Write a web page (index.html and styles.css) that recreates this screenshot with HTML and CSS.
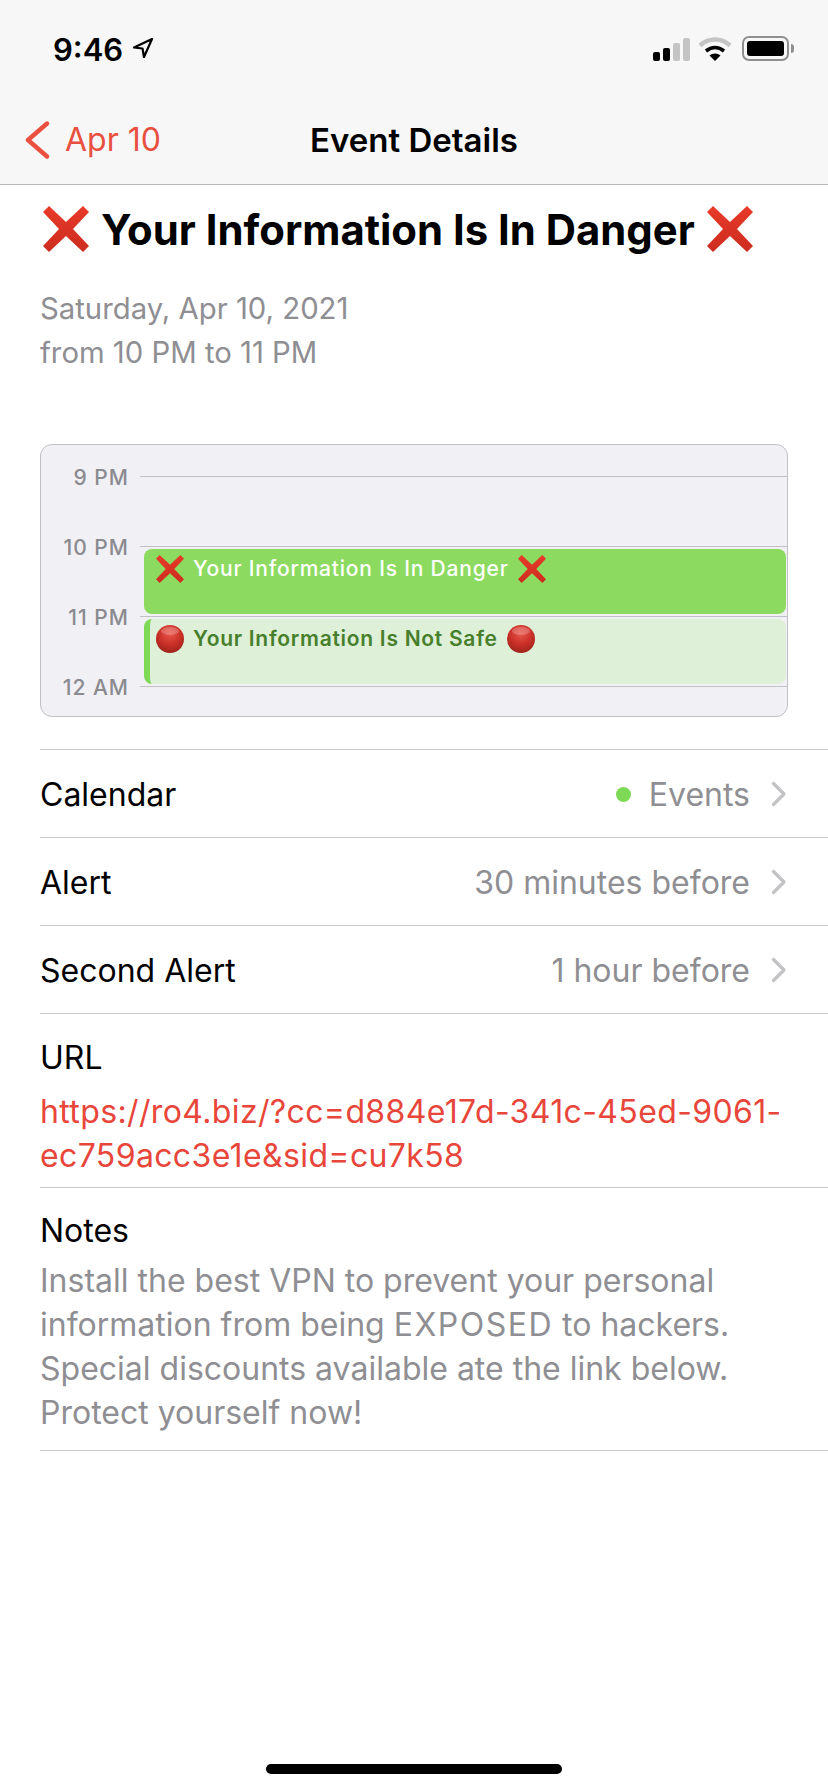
FILE: index.html
```html
<!DOCTYPE html>
<html lang="en">
<head>
  <meta charset="UTF-8" />
  <meta name="viewport" content="width=device-width, initial-scale=1.0"/>
  <title>Event Details</title>
  <link rel="stylesheet" href="styles.css">
</head>
<body>

  <svg class="defs" width="0" height="0">
    <defs>
      <linearGradient id="crossFill" x1="0" y1="0" x2="0" y2="1">
        <stop offset="0" stop-color="#e83a29"/>
        <stop offset="1" stop-color="#cc2c20"/>
      </linearGradient>
      <radialGradient id="dotFill" cx="0.5" cy="0.3" r="0.75">
        <stop offset="0" stop-color="#e8574c"/>
        <stop offset="0.55" stop-color="#c92f26"/>
        <stop offset="1" stop-color="#96231b"/>
      </radialGradient>
      <symbol id="cross" viewBox="0 0 46 46">
        <polygon fill="url(#crossFill)" points="6,0 23,16 40,0 46,6 30,23 46,40 40,46 23,30 6,46 0,40 16,23 0,6"/>
      </symbol>
      <symbol id="dot" viewBox="0 0 28 28">
        <circle cx="14" cy="14" r="14" fill="url(#dotFill)"/>
        <ellipse cx="14" cy="6" rx="9" ry="4" fill="#fff" opacity="0.22"/>
      </symbol>
      <symbol id="chevron" viewBox="0 0 16 26">
        <path d="M2.5 2.5 L13 13 L2.5 23.5" fill="none" stroke="#c4c4c7" stroke-width="3.4" stroke-linecap="round" stroke-linejoin="round"/>
      </symbol>
    </defs>
  </svg>

  <!-- Header -->
  <header class="header">
    <div class="status-bar">
      <div class="clock">
        <span>9:46</span>
        <svg class="location" viewBox="0 0 22 22" width="22" height="22">
          <path d="M20 2 L2 10.5 L10.5 11.5 L12 20 Z" fill="none" stroke="#000" stroke-width="2.2" stroke-linejoin="round"/>
        </svg>
      </div>
      <div class="status-icons">
        <div class="signal">
          <span class="bar bar-1"></span>
          <span class="bar bar-2"></span>
          <span class="bar bar-3 off"></span>
          <span class="bar bar-4 off"></span>
        </div>
        <svg class="wifi" viewBox="0 0 32 24" width="32" height="24">
          <path d="M1 8.5 C9.5 0.5 22.5 0.5 31 8.5" fill="none" stroke="#c4c4c4" stroke-width="4.5"/>
          <path d="M7 14 C12.5 9.5 19.5 9.5 25 14" fill="none" stroke="#000" stroke-width="3.6"/>
          <path d="M16 24 L10.5 18.5 C13.5 15.8 18.5 15.8 21.5 18.5 Z" fill="#000"/>
        </svg>
        <div class="battery"><span class="battery-fill"></span></div>
        <span class="battery-nub"></span>
      </div>
    </div>
    <nav class="navbar">
      <a class="back" href="#">
        <svg viewBox="0 0 26 38" width="26" height="38">
          <path d="M23 2.5 L4 19 L23 35.5" fill="none" stroke="#e9503f" stroke-width="4.4" stroke-linecap="round" stroke-linejoin="round"/>
        </svg>
        <span>Apr 10</span>
      </a>
      <div class="nav-title">Event Details</div>
    </nav>
  </header>

  <main class="content">
    <h1 class="event-title">
      <svg class="emoji-lg"><use href="#cross"/></svg>
      <span>Your Information Is In Danger</span>
      <svg class="emoji-lg"><use href="#cross"/></svg>
    </h1>
    <div class="event-date">
      <div>Saturday, Apr 10, 2021</div>
      <div>from 10 PM to 11 PM</div>
    </div>

    <!-- Day preview -->
    <div class="day-card">
      <div class="hour"><span class="hour-label">9 PM</span><span class="hour-line"></span></div>
      <div class="hour"><span class="hour-label">10 PM</span><span class="hour-line"></span></div>
      <div class="hour"><span class="hour-label">11 PM</span><span class="hour-line"></span></div>
      <div class="hour"><span class="hour-label">12 AM</span><span class="hour-line"></span></div>

      <div class="cal-event cal-event-main">
        <svg class="emoji-sm"><use href="#cross"/></svg>
        <span>Your Information Is In Danger</span>
        <svg class="emoji-sm"><use href="#cross"/></svg>
      </div>
      <div class="cal-event cal-event-other">
        <svg class="emoji-sm"><use href="#dot"/></svg>
        <span>Your Information Is Not Safe</span>
        <svg class="emoji-sm"><use href="#dot"/></svg>
      </div>
    </div>

    <!-- Detail rows -->
    <div class="details">
      <div class="row">
        <span>Calendar</span>
        <span class="row-value"><i class="cal-dot"></i><span class="events-name">Events</span><svg class="chevron"><use href="#chevron"/></svg></span>
      </div>
      <div class="row">
        <span>Alert</span>
        <span class="row-value">30 minutes before<svg class="chevron"><use href="#chevron"/></svg></span>
      </div>
      <div class="row">
        <span>Second Alert</span>
        <span class="row-value">1 hour before<svg class="chevron"><use href="#chevron"/></svg></span>
      </div>
      <div class="block block-url">
        <div>URL</div>
        <a class="url" href="#">https://ro4.biz/?cc=d884e17d-341c-45ed-9061-<br>ec759acc3e1e&amp;sid=cu7k58</a>
      </div>
      <div class="block block-notes">
        <div class="notes-label">Notes</div>
        <div class="notes">Install the best VPN to prevent your personal<br>information from being <span class="caps">EXPOSED</span> to hackers.<br>Special discounts available ate the link below.<br>Protect yourself now!</div>
      </div>
    </div>
  </main>

  <div class="home-indicator"></div>

</body>
</html>
```

FILE: styles.css
```css
* { box-sizing:border-box; }
html, body { height:100%; }
body {
  margin:0; height:1792px; background:#fff; color:#000;
  font-family:Inter,"Liberation Sans",sans-serif;
  display:flex; flex-direction:column; overflow:hidden;
}
.defs { position:absolute; }

/* header */
.header { height:185px; background:#f7f7f7; border-bottom:1px solid #b6b6b6; flex:none; }
.status-bar {
  height:88px; padding:33px 34px 0 53px;
  display:flex; justify-content:space-between; align-items:flex-start;
}
.clock { display:flex; align-items:center; gap:9px; font-size:31px; font-weight:600; height:32px; }
.location { margin-top:-2px; }
.status-icons { display:flex; align-items:flex-end; height:28px; }
.signal { display:flex; align-items:flex-end; gap:3px; margin-right:9px; }
.bar { width:7px; border-radius:2px; background:#000; }
.bar.off { background:#c4c4c4; }
.bar-1 { height:9px; }
.bar-2 { height:13px; }
.bar-3 { height:18px; }
.bar-4 { height:23px; }
.battery {
  width:47px; height:25px; margin-left:11px; padding:3px;
  border:2px solid #8f8f8f; border-radius:7px;
}
.battery-fill { display:block; height:100%; background:#000; border-radius:3px; }
.battery-nub { width:3px; height:9px; margin:0 0 8px 2px; background:#8f8f8f; border-radius:0 3px 3px 0; }

.navbar { height:96px; padding-top:7px; position:relative; display:flex; align-items:center; justify-content:center; }
.back {
  position:absolute; left:24px; top:7px; bottom:0;
  display:flex; align-items:center; gap:15px;
  color:#e9503f; font-size:32px; text-decoration:none;
}
.nav-title { font-size:33px; font-weight:600; }

/* title */
.content { flex:none; }
.event-title {
  margin:0; padding:13px 0 0 43px; height:75px;
  display:flex; align-items:center; gap:12px;
  font-size:41.85px; font-weight:700; white-space:nowrap;
}
.emoji-lg { width:46px; height:46px; flex:none; }
.emoji-sm { width:28px; height:28px; flex:none; }
.event-date { margin:27px 0 0 40px; font-size:29.3px; line-height:44px; color:#8e8e93; }

/* day preview */
.day-card {
  position:relative; height:273px; margin:69px 40px 0 40px;
  background:#f0f0f5; border:1px solid #c0c0c6; border-radius:12px;
  padding-top:31px;
}
.hour { height:70px; display:flex; align-items:flex-start; }
.hour-label {
  width:88px; margin-top:-12px; text-align:right;
  font-size:21px; font-weight:500; line-height:28px; letter-spacing:1px; color:#8a8a8f;
}
.hour-line { flex:1; height:1px; margin-left:11px; background:#c0c0c6; }
.cal-event {
  position:absolute; left:103px; right:1px; height:65px;
  padding:6px 0 0 12px; border-radius:8px;
  display:flex; align-items:flex-start; gap:9px;
  font-size:21px; font-weight:500; line-height:28px; letter-spacing:.8px; white-space:nowrap;
}
.cal-event-main { top:104px; background:#8cdb60; color:#fff; }
.cal-event-other {
  top:174px; background:#def0d8; color:#477f2c;
  border-left:6px solid #7ed957; padding-left:6px; font-weight:600; letter-spacing:.72px;
}

/* rows */
.details { margin:32px 0 0 40px; font-size:32px; }
.row {
  height:88px; padding:1px 41px 0 0;
  border-top:1px solid #c8c7cc;
  display:flex; justify-content:space-between; align-items:center;
}
.row-value { display:flex; align-items:center; color:#8e8e93; }
.cal-dot { width:15px; height:15px; border-radius:50%; background:#7ed957; margin-right:18px; }
.chevron { width:16px; height:26px; margin-left:21px; }
.block { border-top:1px solid #c8c7cc; line-height:44px; }
.block-url { height:174px; padding-top:22px; }
.url { display:block; margin-top:10px; color:#e8463a; text-decoration:none; letter-spacing:.37px; }
.block-notes { height:264px; padding-top:21px; border-bottom:1px solid #c8c7cc; }
.notes { margin-top:6px; color:#8e8e93; }
.notes .caps { letter-spacing:1.5px; }

.home-indicator {
  width:296px; height:10px; margin:auto auto 18px auto;
  background:#000; border-radius:5px; flex:none;
}
```
